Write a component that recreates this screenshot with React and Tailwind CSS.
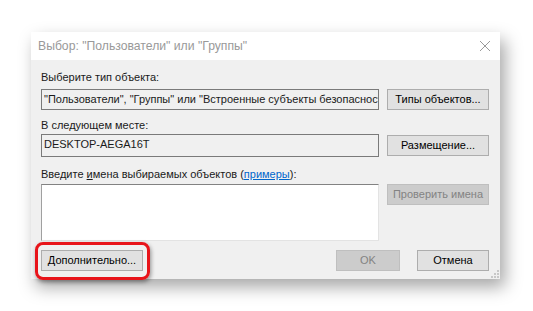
import React from 'react';

const font = { fontFamily: '"Liberation Sans", Arial, sans-serif' };

const Button = ({ children, disabled, className = '' }) => (
  <button
    className={`h-[21px] w-full border text-[11px] leading-none whitespace-nowrap ${
      disabled
        ? 'border-[#bfbfbf] bg-[#cccccc] text-[#838383]'
        : 'border-[#adadad] bg-[#e1e1e1] text-black'
    } ${className}`}
  >
    {children}
  </button>
);

const App = () => {
  return (
    <div className="w-[533px] h-[311px] bg-white overflow-hidden pt-[32px] pl-[31px]" style={font}>
      <div className="w-[469px] h-[247px] flex flex-col bg-[#f0f0f0] shadow-[5px_8px_16px_rgba(0,0,0,0.35)]">
        {/* title bar */}
        <div className="h-[28px] bg-white flex items-center justify-between pl-[7px] pr-[8px]">
          <span className="text-[12.2px] text-[#999999]">Выбор: "Пользователи" или "Группы"</span>
          <svg width="12" height="12" viewBox="0 0 12 12" className="mr-[1px]">
            <path d="M1 1L11 11M11 1L1 11" stroke="#9a9a9a" strokeWidth="1" />
          </svg>
        </div>

        <div className="relative flex-1 flex flex-col pl-[10px] pr-[11px] text-[11px] text-[#1a1a1a]">
          <div className="mt-[10px] h-[15px] leading-[15px]">Выберите тип объекта:</div>
          <div className="mt-[4px] grid grid-cols-[338px_102px] gap-x-[8px] items-center">
            <div className="h-[21px] border border-[#7a7a7a] bg-[#f0f0f0] pl-[2px] leading-[19px] whitespace-nowrap overflow-hidden">
              "Пользователи", "Группы" или "Встроенные субъекты безопасности"
            </div>
            <Button>Типы объектов...</Button>
          </div>

          <div className="mt-[8px] h-[15px] leading-[15px]">В следующем месте:</div>
          <div className="mt-[1px] grid grid-cols-[338px_102px] gap-x-[8px] items-center">
            <div className="h-[23px] border border-[#7a7a7a] bg-[#f0f0f0] pl-[2px] leading-[19px]">
              DESKTOP-AEGA16T
            </div>
            <Button>Размещение...</Button>
          </div>

          <div className="mt-[10px] h-[15px] leading-[15px]">
            Введите <span className="underline">и</span>мена выбираемых объектов (
            <span className="text-[#0066cc] underline">примеры</span>):
          </div>
          <div className="mt-[2px] grid grid-cols-[338px_102px] gap-x-[8px] items-start">
            <div className="h-[57px] bg-white border border-[#e3e3e3] border-t-[#828282] border-l-[#a0a0a0]" />
            <Button disabled>Проверить имена</Button>
          </div>

          <div className="mt-[9px] flex items-center">
            <div className="relative w-[102px]">
              <Button>Дополнительно...</Button>
              <div className="absolute -left-[6px] -top-[8px] -right-[7px] -bottom-[9px] rounded-[8px] border-[3px] border-[#e8141a] shadow-[1px_2px_4px_rgba(0,0,0,0.4)]" />
            </div>
            <div className="ml-auto w-[64px] mr-[17px]">
              <Button disabled>OK</Button>
            </div>
            <div className="w-[72px]">
              <Button>Отмена</Button>
            </div>
          </div>

          {/* resize grip */}
          <svg width="8" height="8" viewBox="0 0 8 8" className="absolute right-[1px] bottom-[1px]">
            <rect x="6" y="0" width="2" height="2" fill="#c8c8c8" />
            <rect x="3" y="3" width="2" height="2" fill="#c8c8c8" />
            <rect x="6" y="3" width="2" height="2" fill="#c8c8c8" />
            <rect x="0" y="6" width="2" height="2" fill="#c8c8c8" />
            <rect x="3" y="6" width="2" height="2" fill="#c8c8c8" />
            <rect x="6" y="6" width="2" height="2" fill="#c8c8c8" />
          </svg>
        </div>
      </div>
    </div>
  );
};

export default App;
